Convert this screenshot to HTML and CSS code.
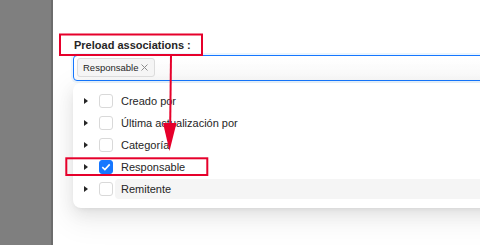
FILE: index.html
```html
<!DOCTYPE html>
<html lang="es">
<head>
<meta charset="utf-8">
<title>Preload associations</title>
<link rel="stylesheet" href="styles.css">
</head>
<body>
<div class="page">
  <aside class="side"></aside>
  <main class="main">
    <div class="field">
      <div class="label">Preload associations :</div>
      <div class="select">
        <span class="tag">Responsable<span class="tag-x">
          <svg width="7" height="7" viewBox="0 0 7 7"><path d="M0.5 0.5L6.5 6.5M6.5 0.5L0.5 6.5" stroke="#8c8c8c" stroke-width="1"/></svg>
        </span></span>
      </div>
      <div class="dropdown">
        <div class="row"><span class="caret"></span><span class="cb"></span><span class="title">Creado por</span></div>
        <div class="row"><span class="caret"></span><span class="cb"></span><span class="title">Última actualización por</span></div>
        <div class="row"><span class="caret"></span><span class="cb"></span><span class="title">Categoría</span></div>
        <div class="row"><span class="caret"></span><span class="cb cb-on"><svg width="10" height="8" viewBox="0 0 10 8"><path d="M1.3 4.1L3.9 6.5L8.7 1.4" fill="none" stroke="#fff" stroke-width="1.6"/></svg></span><span class="title">Responsable</span></div>
        <div class="row"><span class="caret"></span><span class="cb"></span><span class="title title-hover">Remitente</span></div>
      </div>
    </div>
  </main>
  <svg class="annot" width="480" height="245" viewBox="0 0 480 245">
    <rect x="60" y="34.5" width="142" height="20.5" fill="none" stroke="#e6002b" stroke-width="2"/>
    <rect x="66.3" y="158.3" width="141" height="16.7" fill="none" stroke="#e6002b" stroke-width="2"/>
    <path d="M171 55L170.2 125" stroke="#e6002b" stroke-width="2"/>
    <polygon points="163,123 176.5,123 169.5,151" fill="#e6002b"/>
  </svg>
</div>
</body>
</html>
```
FILE: styles.css
```css
html, body {
  margin: 0;
  padding: 0;
  background: #fff;
}
body {
  width: 480px;
  height: 245px;
  overflow: hidden;
  font-family: "Liberation Sans", Arial, sans-serif;
  color: #1f1f1f;
}
.page {
  position: relative;
  display: flex;
  width: 480px;
  height: 245px;
}
.side {
  flex: 0 0 51px;
  background: #7f7f7f;
  border-right: 2px solid #6c6c6c;
}
.main {
  flex: 1;
  padding: 36px 0 0 20px;
  overflow: hidden;
}
.field {
  width: 440px;
}
.label {
  font-size: 11px;
  font-weight: bold;
  line-height: 19px;
  height: 19px;
  padding-left: 1px;
  color: #262626;
}
.select {
  box-sizing: border-box;
  height: 26px;
  border: 1px solid #1677ff;
  border-radius: 4px;
  background: linear-gradient(#fff, #fafafa);
  box-shadow: 0 0 0 2px rgba(5, 145, 255, 0.08);
  padding: 2px 3px;
  display: flex;
  align-items: flex-start;
}
.tag {
  box-sizing: border-box;
  height: 19px;
  display: inline-flex;
  align-items: center;
  gap: 3px;
  padding: 0 6px 0 5px;
  border: 1px solid #dcdcdc;
  border-radius: 3px;
  background: #f5f5f5;
  font-size: 9.5px;
  color: #262626;
}
.tag-x {
  display: flex;
  align-items: center;
}
.dropdown {
  margin-top: 2px;
  background: #fff;
  border-radius: 8px;
  padding: 7px 0 8px;
  box-shadow: 0 6px 16px 0 rgba(0,0,0,0.08), 0 3px 6px -4px rgba(0,0,0,0.12), 0 9px 28px 8px rgba(0,0,0,0.05);
}
.row {
  height: 22px;
  display: flex;
  align-items: center;
  padding-left: 11px;
  font-size: 11px;
}
.caret {
  width: 0;
  height: 0;
  border-left: 4px solid #262626;
  border-top: 3px solid transparent;
  border-bottom: 3px solid transparent;
}
.cb {
  box-sizing: border-box;
  width: 14px;
  height: 14px;
  margin-left: 11px;
  border: 1px solid #d9d9d9;
  border-radius: 3px;
  background: #fff;
  display: flex;
  align-items: center;
  justify-content: center;
}
.cb-on {
  background: #1677ff;
  border-color: #1677ff;
}
.title {
  flex: 1;
  margin-left: 2px;
  padding: 0 6px;
  height: 20px;
  line-height: 20px;
  border-radius: 4px;
  color: #262626;
}
.title-hover {
  background: #f5f5f5;
}
.annot {
  position: absolute;
  left: 0;
  top: 0;
  pointer-events: none;
}
```
